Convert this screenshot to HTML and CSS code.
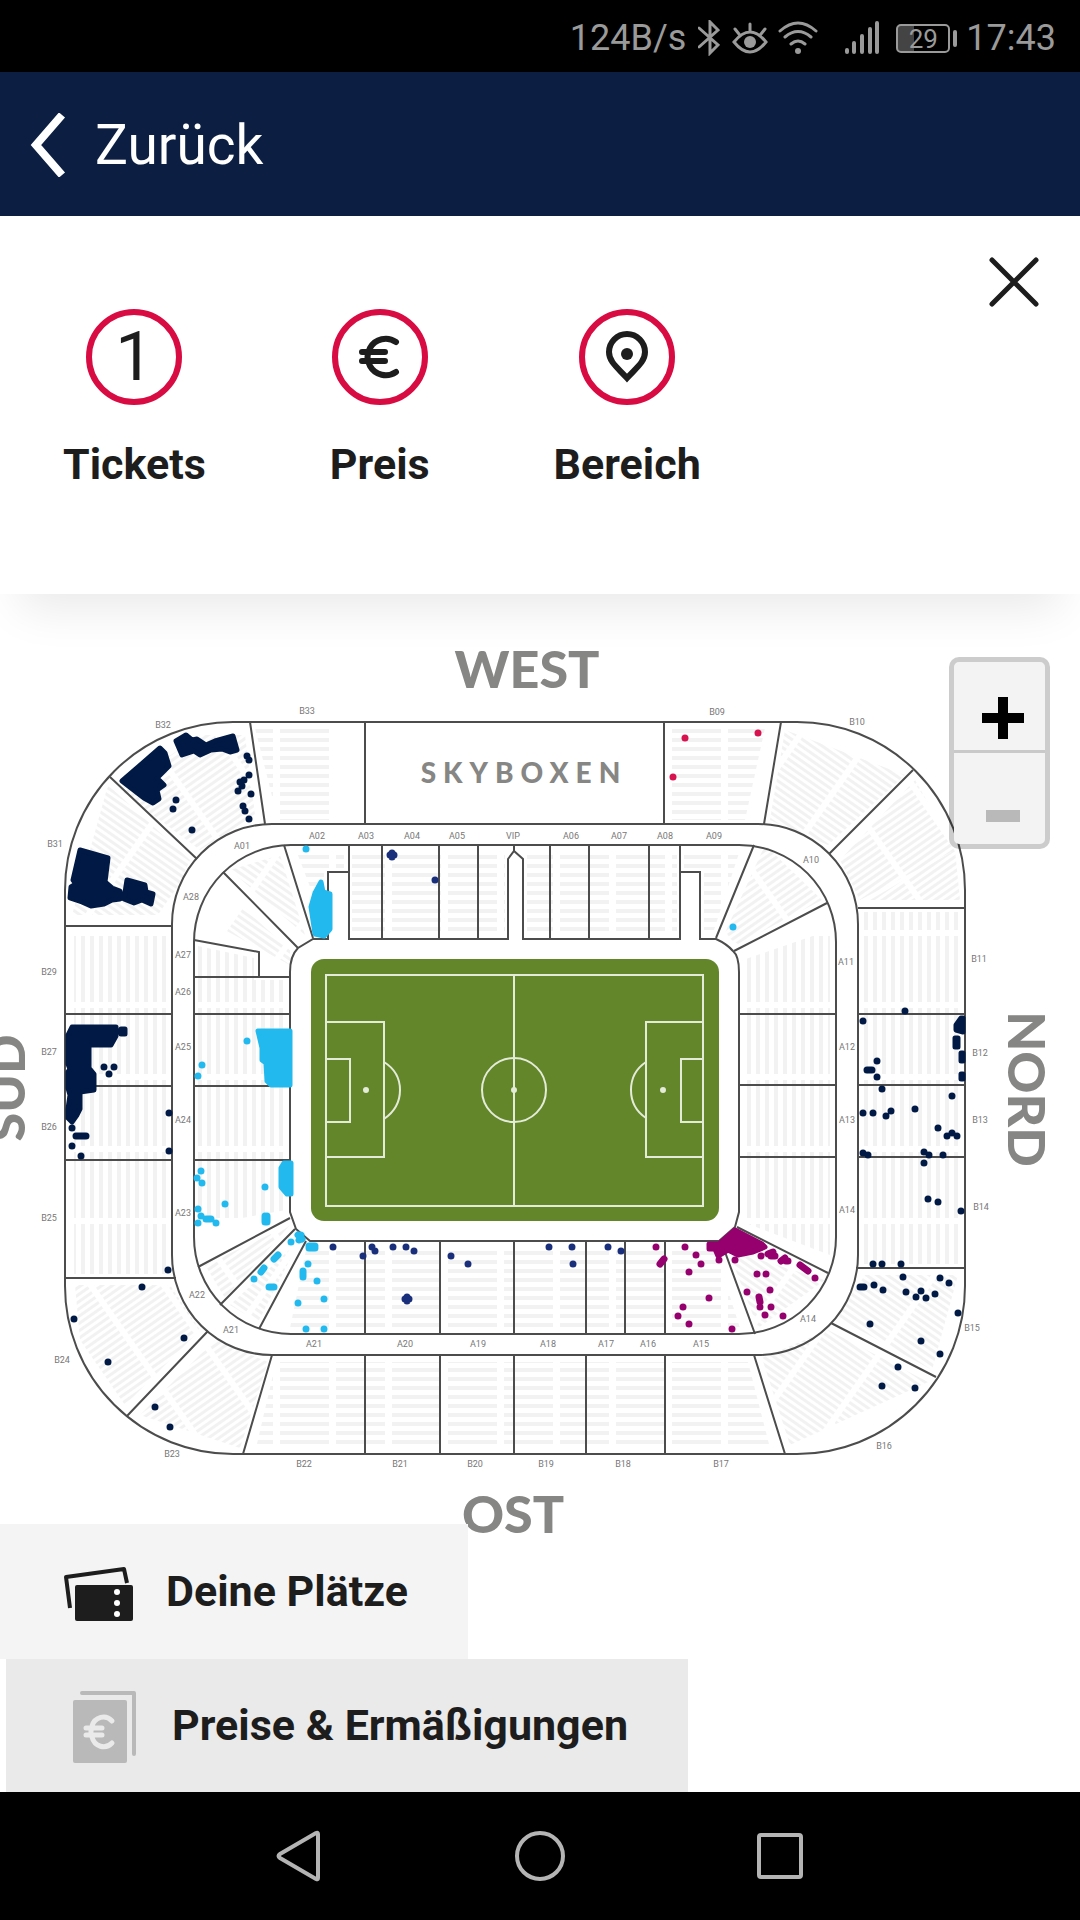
FILE: index.html
```html
<!DOCTYPE html>
<html lang="de">
<head>
    <meta charset="UTF-8">
    <meta name="viewport" content="width=device-width, initial-scale=1.0">
    <title>Saalplan</title>
    <link rel="stylesheet" href="styles.css">
</head>
<body>
    <!-- Status bar -->
    <div class="status-bar">
        <span>124B/s</span>
        <svg class="bluetooth" width="22" height="36" viewBox="0 0 22 36"><path d="M1 8 L20 25 L12 33 V2 L20 10 L1 27"/></svg>
        <svg class="eye" width="36" height="32" viewBox="0 0 36 32">
            <path d="M2 20 Q18 0 34 20 Q18 40 2 20 Z M18 2 V9 M3 7 L7 12 M33 7 L29 12"/>
            <circle cx="18" cy="20" r="6"/>
        </svg>
        <svg class="wifi" width="40" height="34" viewBox="0 0 40 34">
            <path d="M2 10 Q20 -6 38 10 M7 16 Q20 5 33 16 M13 23 Q20 17 27 23"/>
            <circle cx="20" cy="30" r="3"/>
        </svg>
        <svg class="signal" width="36" height="34" viewBox="0 0 36 34"><path d="M3 29 V31 M10 22 V31 M18 15 V31 M26 8 V31 M33 2 V31"/></svg>
        <div class="battery"><span>29</span></div>
        <span>17:43</span>
    </div>

    <!-- Header -->
    <header class="header">
        <a class="back" href="#">
            <svg width="36" height="64" viewBox="0 0 36 64"><path d="M32 2 L6 32 L32 62"/></svg>
            <span>Zurück</span>
        </a>
    </header>

    <!-- Filters -->
    <section class="filters">
        <button class="filter">
            <span class="ring">1</span>
            <span>Tickets</span>
        </button>
        <button class="filter">
            <span class="ring">
                <svg width="44" height="46" viewBox="0 0 44 46"><path d="M38 8 A18 18 0 0 0 12 14 Q7 23 12 32 A18 18 0 0 0 38 38 M4 18 H27 M4 27 H27"/></svg>
            </span>
            <span>Preis</span>
        </button>
        <button class="filter">
            <span class="ring">
                <svg width="44" height="52" viewBox="0 0 44 52"><path d="M22 47 C13 37 4 31 4 21 A18 18 0 0 1 40 21 C40 31 31 37 22 47 Z"/><circle cx="22" cy="23" r="6"/></svg>
            </span>
            <span>Bereich</span>
        </button>
        <button class="close" aria-label="Schließen">
            <svg width="50" height="50" viewBox="0 0 50 50"><path d="M3 3 L47 47 M47 3 L3 47"/></svg>
        </button>
    </section>

    <!-- Stadium map -->
    <main class="map">
        <svg class="stadium" viewBox="0 594 1080 1198">
            <defs>
                <pattern id="rows" width="56" height="9" patternUnits="userSpaceOnUse"><rect width="49" height="4"/></pattern>
                <pattern id="cols" width="9" height="72" patternUnits="userSpaceOnUse"><rect width="4" height="66"/></pattern>
                <pattern id="diagUp" width="60" height="6" patternUnits="userSpaceOnUse" patternTransform="rotate(-35)"><rect width="54" height="3"/></pattern>
                <pattern id="diagDown" width="60" height="6" patternUnits="userSpaceOnUse" patternTransform="rotate(35)"><rect width="54" height="3"/></pattern>
            </defs>

            <!-- Seat rows -->
            <path fill="url(#rows)" d="M255 728 H330 V820 H278 Z M672 728 H765 L745 820 H672 Z M296 850 H344 V868 H324 V892 H312 Z M352 850 H505 V934 H352 Z M527 850 H677 V934 H527 Z M684 850 H740 L714 930 H704 V868 H684 Z M306 1250 H715 L740 1328 H290 Z M276 1362 H748 L770 1448 H256 Z"/>
            <path fill="url(#cols)" d="M74 930 H168 V1274 H74 Z M862 912 H960 V1264 H862 Z"/>
            <path fill="url(#cols)" d="M198 946 L254 958 V980 H286 V1210 L198 1226 Z"/>
            <path fill="url(#cols)" d="M743 960 L830 930 V1255 L743 1222 Z"/>
            <path fill="url(#diagUp)" d="M120 790 L200 735 L245 735 L255 815 L200 850 Z M870 900 L955 850 L960 900 Z M840 860 L915 780 L955 850 L860 900 Z M765 845 L822 900 L738 944 L724 935 Z M75 1285 H170 L200 1330 L125 1405 L80 1340 Z M215 1340 L268 1362 L240 1448 L140 1415 Z M205 1265 L290 1225 L225 1298 Z"/>
            <path fill="url(#diagDown)" d="M108 785 L190 860 L165 915 H72 Z M785 730 L905 775 L828 845 L770 820 Z M280 855 L305 935 L230 870 Z M240 905 L290 950 V965 L225 930 Z M862 1275 H958 L932 1370 L838 1318 Z M828 1330 L928 1382 L790 1445 L762 1358 Z M728 1250 L825 1280 L758 1328 Z M230 1305 L300 1240 L258 1322 Z"/>

            <!-- Section borders -->
            <g class="borders">
                <rect x="65" y="722" width="900" height="732" rx="168"/>
                <rect x="172" y="824" width="686" height="531" rx="100"/>
                <rect x="194" y="845" width="642" height="489" rx="97"/>
                <path d="M328 939 H313 L298 948 Q290 956 290 972 V1212 L296 1229 L310 1241 H719 L735 1227 L739 1212 V972 Q739 956 733 951 Q727 944 716 939 H700 V872 H680 V939 H523 V859 L514 851 L508 859 V939 H349 V872 H328 Z"/>
                <path d="M250 722 L265 824 M365 722 V824 M664 722 V824 M781 722 L764 824 M110 777 L197 859 M913 770 L829 854"/>
                <path d="M65 926 H172 M65 1014 H172 M65 1086 H172 M65 1160 H172 M65 1278 H176 M858 908 H965 M858 1014 H965 M858 1085 H965 M858 1157 H965 M856 1268 H965"/>
                <path d="M127 1416 L208 1331 M831 1323 L936 1377 M272 1355 L243 1454 M365 1355 V1454 M440 1355 V1454 M514 1355 V1454 M586 1355 V1454 M665 1355 V1454 M754 1355 L785 1454"/>
                <path d="M284 845 L313 938 M223 872 L298 948 M754 845 L716 938 M827 903 L734 951 M349 845 V872 M382 845 V939 M439 845 V939 M478 845 V939 M514 845 V851 M550 845 V939 M589 845 V939 M649 845 V939 M680 845 V872"/>
                <path d="M194 940 L259 952 V977 M194 977 H290 M194 1014 H290 M194 1086 H290 M194 1160 H290 M739 1014 H836 M739 1085 H836 M739 1157 H836"/>
                <path d="M290 1218 L198 1267 M295 1229 L220 1305 M306 1241 L259 1329 M737 1227 L828 1273 M721 1241 L755 1334 M365 1241 V1334 M440 1241 V1334 M514 1241 V1334 M586 1241 V1334 M625 1241 V1334 M665 1241 V1334"/>
            </g>

            <!-- Pitch -->
            <rect x="311" y="959" width="408" height="262" rx="13" fill="#628629"/>
            <g class="pitch-lines">
                <rect x="326" y="975" width="377" height="231"/>
                <path d="M514 975 V1206 M326 1022 H384 V1157 H326 M326 1059 H350 V1122 H326 M703 1022 H646 V1157 H703 M703 1059 H681 V1122 H703 M384 1062 Q400 1072 400 1090 Q400 1108 384 1119 M646 1062 Q631 1072 631 1090 Q631 1108 646 1118"/>
                <circle cx="514" cy="1090" r="32"/>
                <path class="spots" d="M366 1090h0M514 1090h0M663 1090h0"/>
            </g>

            <!-- Free seats -->
            <g class="seats navy">
                <path class="block" d="M122 781 L160 748 L165 753 L169 766 L157 778 L164 785 L157 790 L159 799 L153 803 L144 798 Z M176 741 L186 735 L192 740 L197 739 L206 745 L215 741 L233 736 L237 750 L230 752 L222 749 L211 750 L200 755 L194 751 L182 755 Z M80 850 L108 858 L105 882 L112 888 L120 891 V899 L112 900 L104 904 L91 906 L82 902 L70 898 L71 887 L76 884 L73 880 Z M127 880 L145 885 L146 892 L153 894 L151 904 L142 900 L134 903 L124 899 Z M72 1027 H116 V1036 L111 1045 H89 V1068 L94 1074 V1090 L80 1092 V1109 L77 1115 L72 1122 L68 1118 V1109 L70 1095 L68 1088 V1072 L70 1069 L68 1064 V1035 Z M121 1029 H125 V1034 H121 Z"/>
                <path d="M247 756h0M249 760h0M249 775h0M240 782h0M244 780h0M242 786h0M238 791h0M251 794h0M243 806h0M245 811h0M249 819h0M176 800h0M173 809h0M192 830h0M72 1128h0M76 1136H86M72 1146h0M81 1156h0M104 1067h0M114 1067h0M109 1074h0M169 1113h0M169 1151h0M168 1270h0M142 1287h0M74 1319h0M108 1362h0M184 1338h0M155 1407h0M170 1427h0"/>
                <path d="M905 1011h0M863 1021h0M877 1061h0M867 1070h5M877 1077h0M882 1089h0M952 1096h0M863 1113h0M873 1113h0M891 1111h0M886 1116h0M915 1109h0M938 1128h0M952 1133h0M947 1136h0M957 1136h0M863 1153h0M868 1155h0M924 1152h0M929 1155h0M943 1155h0M924 1163h0M928 1199h0M938 1202h0M961 1211h0M873 1264h0M882 1264h0M901 1264h0"/>
                <path d="M903 1277h0M940 1278h0M949 1283h0M860 1287h4M874 1285h0M883 1290h0M906 1292h0M921 1291h0M916 1297h0M926 1298h0M935 1294h0M958 1313h0M870 1324h0M921 1341h0M940 1354h0M898 1367h0M882 1386h0M915 1388h0"/>
                <path class="block" d="M961 1018h2V1032L956 1030V1025Z M955 1038h3V1047h-3Z M961 1053h2V1061h-2Z M961 1074h2V1079h-2Z"/>
            </g>
            <g class="seats blue">
                <path d="M390 855h4M392 853v4M435 880h0M333 1247h0M363 1256h0M372 1247h0M375 1251h0M393 1247h0M406 1247h0M414 1251h0M451 1256h0M468 1264h0M405 1299h4M407 1297v4M549 1247h0M572 1247h0M573 1264h0M608 1247h0M621 1251h0"/>
            </g>
            <g class="seats red">
                <path d="M685 738h0M758 733h0M673 777h0"/>
            </g>
            <g class="seats cyan">
                <path class="block" d="M321 882 L323 892 L330 894 V929 L324 936 L315 934 L311 907 L315 893 Z M258 1031 H290 V1085 H271 L267 1081 L266 1063 L262 1060 V1048 Z M284 1163 H291 V1194 H287 L281 1187 V1168 Z"/>
                <path d="M306 849h0M733 927h0M247 1041h0M202 1065h0M198 1076h0M201 1171h0M197 1178h0M202 1183h0M265 1187h0M225 1204h0M198 1209h0M201 1216h0M206 1219h5M216 1223h0M198 1223h0M265 1216v6M267 1216v6M291 1242h0M298 1235l4 4M301 1235l-2 5M309 1246h6M309 1248h6M278 1255l-4 4M308 1264h0M303 1271v6M264 1268l-3 4M254 1279h0M317 1281h0M269 1287h5M298 1303h0M324 1299h0M306 1329h0M324 1329h0"/>
            </g>
            <g class="seats magenta">
                <path class="block" d="M709 1244 H719 L735 1230 L762 1244 L765 1247 L753 1252 L738 1255 L728 1250 L718 1256 L715 1249 H709 Z"/>
                <path d="M656 1247h0M685 1247h0M664 1259l-4 5M696 1255h0M701 1264h0M689 1272h0M709 1298h0M683 1307h0M678 1316h0M689 1324h0M732 1329h0M719 1260h0M735 1260h0M761 1256h0M768 1254l5 -2M771 1256h4M781 1261l4 -3M786 1261h2M800 1265l8 6M815 1278h0M757 1274h0M766 1274h0M747 1292h0M770 1290h0M759 1297l1 5M760 1307h0M771 1307h0M765 1315h0M783 1316h0"/>
            </g>

            <!-- Names of the stands -->
            <g class="stands">
                <text x="527" y="688">WEST</text>
                <text x="513" y="1533">OST</text>
                <text transform="translate(25 1088) rotate(-90)">SÜD</text>
                <text transform="translate(1008 1089) rotate(90)">NORD</text>
                <text class="boxes" x="524" y="783">SKYBOXEN</text>
            </g>
            <g class="sections">
                <text x="163" y="728">B32</text><text x="307" y="714">B33</text><text x="717" y="715">B09</text><text x="857" y="725">B10</text>
                <text x="55" y="847">B31</text><text x="49" y="975">B29</text><text x="49" y="1055">B27</text><text x="49" y="1130">B26</text><text x="49" y="1221">B25</text>
                <text x="62" y="1363">B24</text><text x="172" y="1457">B23</text><text x="304" y="1467">B22</text><text x="400" y="1467">B21</text><text x="475" y="1467">B20</text>
                <text x="546" y="1467">B19</text><text x="623" y="1467">B18</text><text x="721" y="1467">B17</text><text x="884" y="1449">B16</text>
                <text x="972" y="1331">B15</text><text x="981" y="1210">B14</text><text x="980" y="1123">B13</text><text x="980" y="1056">B12</text><text x="979" y="962">B11</text>
                <text x="317" y="839">A02</text><text x="366" y="839">A03</text><text x="412" y="839">A04</text><text x="457" y="839">A05</text><text x="513" y="839">VIP</text>
                <text x="571" y="839">A06</text><text x="619" y="839">A07</text><text x="665" y="839">A08</text><text x="714" y="839">A09</text><text x="811" y="863">A10</text>
                <text x="242" y="849">A01</text><text x="191" y="900">A28</text><text x="183" y="958">A27</text><text x="183" y="995">A26</text><text x="183" y="1050">A25</text>
                <text x="183" y="1123">A24</text><text x="183" y="1216">A23</text><text x="197" y="1298">A22</text><text x="231" y="1333">A21</text>
                <text x="314" y="1347">A21</text><text x="405" y="1347">A20</text><text x="478" y="1347">A19</text><text x="548" y="1347">A18</text><text x="606" y="1347">A17</text>
                <text x="648" y="1347">A16</text><text x="701" y="1347">A15</text><text x="808" y="1322">A14</text><text x="847" y="1213">A14</text><text x="847" y="1123">A13</text>
                <text x="847" y="1050">A12</text><text x="846" y="965">A11</text>
            </g>
        </svg>

        <div class="zoom">
            <button aria-label="Vergrößern"><span class="plus"></span></button>
            <button aria-label="Verkleinern" disabled><span class="minus"></span></button>
        </div>

        <div class="actions">
            <button class="seats-button">
                <svg width="74" height="60" viewBox="0 0 74 60">
                    <path class="ticket-back" d="M8 45 L4 14 L62 6 L65 20"/>
                    <rect x="13" y="22" width="58" height="36" rx="2" fill="#1d1d1d"/>
                    <circle cx="55" cy="29" r="3" fill="#fff"/><circle cx="55" cy="40" r="3" fill="#fff"/><circle cx="55" cy="51" r="3" fill="#fff"/>
                </svg>
                <span>Deine Plätze</span>
            </button>
            <button class="prices-button">
                <svg width="74" height="72" viewBox="0 0 74 72">
                    <rect x="5" y="9" width="54" height="63" rx="2" fill="#b9b9b9"/>
                    <path class="note-back" d="M14 2 H66 V63"/>
                    <path class="euro" d="M44 30 A12 13 0 0 0 24 35 Q22 41 24 46 A12 13 0 0 0 44 52 M18 37 H34 M18 44 H34"/>
                </svg>
                <span>Preise &amp; Ermäßigungen</span>
            </button>
        </div>
    </main>

    <!-- Navigation bar -->
    <nav class="nav-bar">
        <button aria-label="Zurück"><svg width="48" height="52" viewBox="0 0 48 52"><path d="M42 4 V48 Q42 50 40 49 L4 28 Q1 26 4 24 L40 3 Q42 2 42 4 Z"/></svg></button>
        <button aria-label="Start"><svg width="52" height="52" viewBox="0 0 52 52"><circle cx="26" cy="26" r="23"/></svg></button>
        <button aria-label="Übersicht"><svg width="48" height="48" viewBox="0 0 48 48"><rect x="3" y="3" width="42" height="42" rx="2"/></svg></button>
    </nav>
</body>
</html>
```
FILE: styles.css
```css
* {
    box-sizing: border-box;
}

body {
    margin: 0;
    min-height: 100vh;
    display: flex;
    flex-direction: column;
    background: #fff;
    color: #1d1d1d;
    font-family: Roboto, sans-serif;
}

button {
    padding: 0;
    border: none;
    background: none;
    color: inherit;
    font: inherit;
    cursor: pointer;
}

svg {
    display: block;
    fill: none;
}

/* Status bar */
.status-bar {
    display: flex;
    align-items: center;
    justify-content: flex-end;
    height: 72px;
    padding: 4px 24px 0 0;
    background: #000;
    color: #9a9a9a;
    font-size: 36px;
}

.status-bar svg {
    stroke: #9a9a9a;
    stroke-width: 3;
    stroke-linecap: round;
}

.status-bar circle {
    fill: #9a9a9a;
    stroke: none;
}

.bluetooth {
    margin-left: 12px;
}

.eye {
    margin-left: 12px;
}

.wifi {
    margin-left: 10px;
}

.status-bar .signal {
    margin: 0 16px 0 26px;
    stroke-width: 4;
}

.battery {
    position: relative;
    width: 54px;
    height: 29px;
    margin-right: 16px;
    border: 2px solid #9a9a9a;
    border-radius: 5px;
    background: linear-gradient(90deg, #444 32%, #000 32%);
    font-size: 26px;
    line-height: 26px;
    text-align: center;
}

.battery::after {
    content: "";
    position: absolute;
    top: 4px;
    right: -9px;
    width: 4px;
    height: 17px;
    border-radius: 2px;
    background: #9a9a9a;
}

/* Header */
.header {
    height: 144px;
    padding-left: 30px;
    background: #0c1f42;
}

.back {
    display: inline-flex;
    align-items: center;
    gap: 29px;
    height: 144px;
    padding-top: 2px;
    color: #fff;
    font-size: 55px;
    text-decoration: none;
}

.back svg {
    stroke: #fff;
    stroke-width: 8;
}

/* Filters */
.filters {
    position: relative;
    z-index: 1;
    display: flex;
    align-items: flex-start;
    gap: 124px;
    height: 378px;
    padding: 93px 63px 0;
    background: #fff;
    box-shadow: 0 34px 44px -20px rgba(0, 0, 0, 0.09);
}

.filter {
    display: flex;
    flex-direction: column;
    align-items: center;
    gap: 34px;
    font-size: 43px;
    font-weight: 700;
    line-height: 50px;
}

.ring {
    display: flex;
    align-items: center;
    justify-content: center;
    width: 96px;
    height: 96px;
    border: 6px solid #d80b42;
    border-radius: 50%;
    font-size: 68px;
    font-weight: 400;
}

.ring svg {
    stroke: #1d1d1d;
    stroke-width: 6;
    stroke-linecap: round;
}

.ring circle {
    fill: #1d1d1d;
    stroke: none;
}

.close {
    position: absolute;
    top: 41px;
    right: 41px;
}

.close svg {
    stroke: #1d1d1d;
    stroke-width: 5;
    stroke-linecap: round;
}

/* Stadium map */
.map {
    position: relative;
    flex: 1;
    overflow: hidden;
}

.stadium {
    width: 100%;
    height: auto;
}

.stadium pattern rect {
    fill: #f2f2f2;
}

.borders {
    stroke: #4c4c4c;
    stroke-width: 2;
}

.pitch-lines {
    stroke: #e4ebd8;
    stroke-width: 2;
}

.spots {
    stroke-width: 6;
    stroke-linecap: round;
}

.seats {
    stroke-width: 7;
    stroke-linecap: round;
    stroke-linejoin: round;
}

.seats .block {
    stroke-width: 5;
}

.navy {
    stroke: #001a45;
}

.navy .block {
    fill: #001a45;
}

.blue {
    stroke: #1a2f7c;
}

.red {
    stroke: #d8114f;
}

.cyan {
    stroke: #22baee;
}

.cyan .block {
    fill: #22baee;
}

.magenta {
    stroke: #96006e;
}

.magenta .block {
    fill: #96006e;
}

.stands {
    fill: #868684;
    font-family: Lato, sans-serif;
    font-size: 52px;
    font-weight: 900;
    text-anchor: middle;
}

.stands .boxes {
    font-size: 28px;
    letter-spacing: 7px;
}

.sections {
    fill: #777;
    font-size: 9px;
    text-anchor: middle;
}

/* Zoom buttons */
.zoom {
    position: absolute;
    top: 63px;
    right: 30px;
    display: flex;
    flex-direction: column;
    width: 101px;
    border: 5px solid rgba(0, 0, 0, 0.2);
    border-radius: 10px;
    background: #f3f3f3;
    background-clip: padding-box;
}

.zoom button {
    display: flex;
    align-items: center;
    justify-content: center;
    height: 91px;
    padding-left: 6px;
}

.zoom button:first-child {
    padding-top: 24px;
    border-bottom: 3px solid #c9c9c9;
}

.zoom button:last-child {
    padding-top: 34px;
}

.plus {
    width: 42px;
    height: 42px;
    background: linear-gradient(#000, #000) center / 42px 10px no-repeat,
        linear-gradient(#000, #000) center / 10px 42px no-repeat;
}

.minus {
    width: 34px;
    height: 12px;
    background: #b9b9b9;
}

/* Buttons at the bottom */
.actions {
    position: absolute;
    bottom: 0;
    left: 0;
    display: flex;
    flex-direction: column;
    align-items: flex-start;
}

.actions button {
    display: flex;
    align-items: center;
    gap: 30px;
    padding: 0 60px 2px 62px;
    font-size: 43px;
    font-weight: 700;
}

.seats-button {
    height: 135px;
    background: #f4f4f4;
}

.actions .prices-button {
    height: 133px;
    margin-left: 6px;
    background: #eaeaea;
}

.actions svg {
    margin-top: 4px;
}

.ticket-back {
    stroke: #1d1d1d;
    stroke-width: 4;
    stroke-linejoin: round;
}

.note-back {
    stroke: #b9b9b9;
    stroke-width: 4;
    stroke-linecap: round;
    stroke-linejoin: round;
}

.euro {
    stroke: #eaeaea;
    stroke-width: 5;
    stroke-linecap: round;
}

/* Navigation bar */
.nav-bar {
    display: flex;
    align-items: center;
    justify-content: center;
    gap: 120px;
    height: 128px;
    background: #000;
}

.nav-bar button {
    display: flex;
    justify-content: center;
    width: 120px;
}

.nav-bar svg {
    stroke: #b4b4b4;
    stroke-width: 4;
}
```
